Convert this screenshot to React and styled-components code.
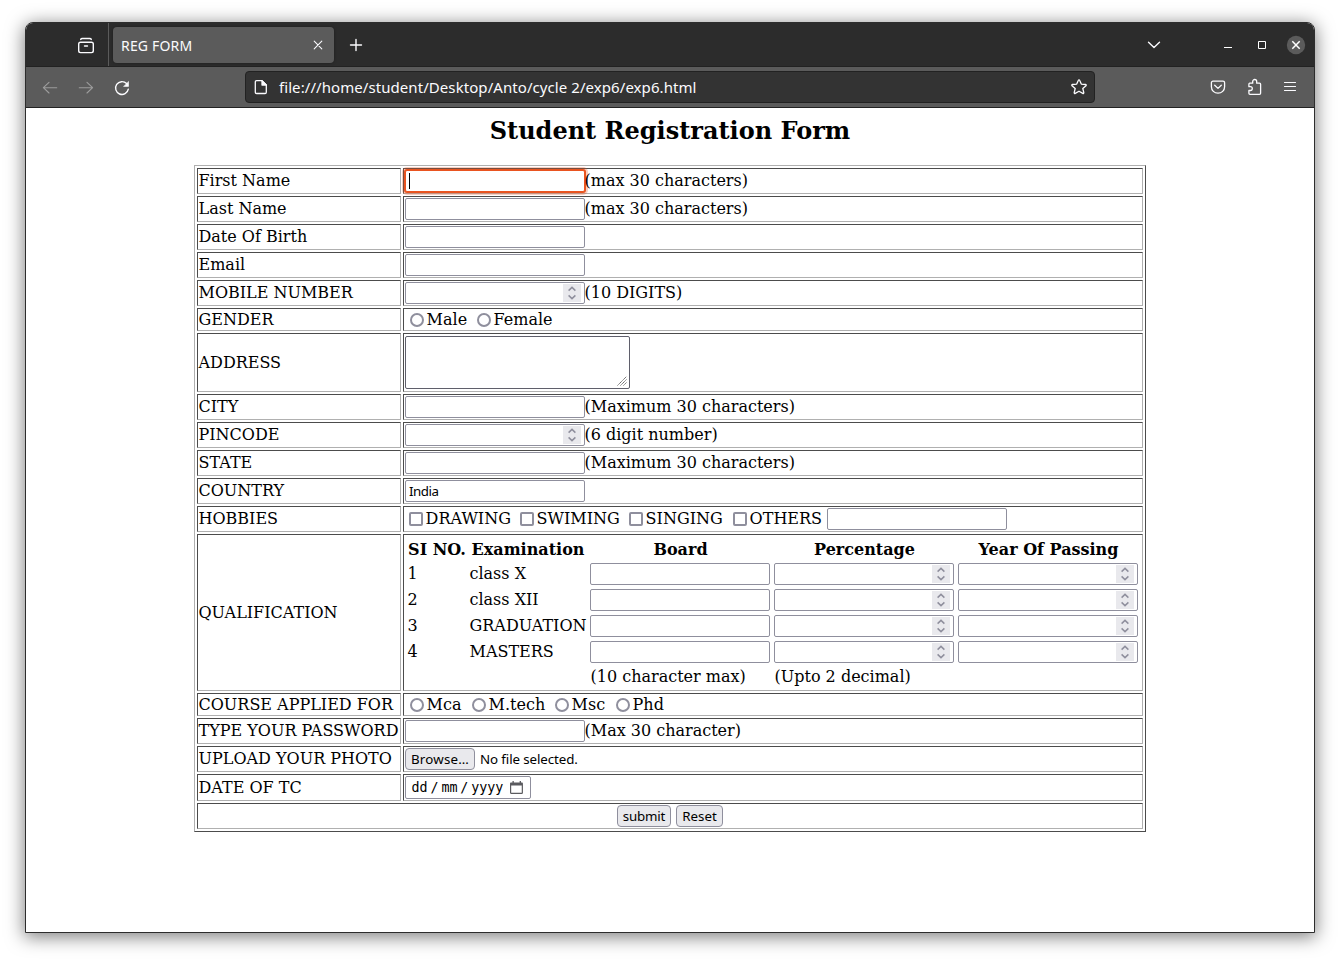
import React from 'react';
import styled, { createGlobalStyle, css } from 'styled-components';

const GlobalStyle = createGlobalStyle`
  * { box-sizing: border-box; }
  body { margin: 0; background: #fff; }
`;

const serif = '"DejaVu Serif", serif';
const ui = '"Noto Sans", "Open Sans", sans-serif';

/* ---------- browser window ---------- */

const Desktop = styled.div`
  height: 961px;
  padding: 22px 25px 28px;
  background: #fff;
  overflow: hidden;
`;

const Window = styled.div`
  width: 1290px;
  height: 911px;
  display: flex;
  flex-direction: column;
  border: 1px solid #2d2d2d;
  border-radius: 8px 8px 0 0;
  overflow: hidden;
  background: #fff;
  box-shadow: 0 3px 18px 1px rgba(0, 0, 0, 0.5);
`;

const TabStrip = styled.div`
  display: flex;
  align-items: stretch;
  flex: none;
  height: 43px;
  background: #2c2c2c;
`;

const FirefoxView = styled.div`
  display: flex;
  align-items: center;
  justify-content: flex-end;
  width: 83px;
  padding-right: 13px;
  border-right: 1px solid #5b5b5b;
`;

const Tab = styled.div`
  display: flex;
  align-items: center;
  justify-content: space-between;
  width: 221px;
  height: 36px;
  margin: 4px 0 0 4px;
  padding: 0 11px 0 8px;
  border-radius: 4px;
  background: #5b5b5b;
  box-shadow: 0 0 3px rgba(0, 0, 0, 0.35);
`;

const TabTitle = styled.span`
  padding-top: 2px;
  font: 14px/20px ${ui};
  letter-spacing: 0.18px;
  color: #fbfbfe;
`;

const NewTab = styled.div`
  display: flex;
  align-items: center;
  padding: 1px 0 0 14.500px;
`;

const WindowControls = styled.div`
  display: flex;
  align-items: center;
  margin-left: auto;
  padding: 0 8px 0 0;
`;

const ControlIcon = styled.svg`
  display: block;
  flex: none;
  margin-right: ${(p) => p.$gap || 0}px;
`;

const Toolbar = styled.div`
  display: flex;
  align-items: center;
  flex: none;
  height: 42px;
  padding: 0 14px;
  border-top: 1px solid #222;
  border-bottom: 1px solid #222;
  background: #5b5b5b;
`;

const NavIcons = styled.div`
  display: flex;
  gap: 16px;
  width: 205px;
  padding-top: 1px;
`;

const AddressBar = styled.div`
  display: flex;
  align-items: center;
  width: 850px;
  height: 32px;
  padding: 0 6px;
  border: 1px solid #222;
  border-radius: 4px;
  background: #333;
`;

const Url = styled.span`
  flex: 1;
  margin-left: 9px;
  font: 15px/20px ${ui};
  letter-spacing: 0.07px;
  white-space: pre;
  color: #fbfbfe;
`;

const ToolbarActions = styled.div`
  display: flex;
  gap: 16px;
  margin-left: auto;
`;

/* ---------- page ---------- */

const Page = styled.main`
  flex: 1;
  display: flex;
  flex-direction: column;
  align-items: center;
  padding-top: 9px;
  font: 16px/19px ${serif};
  color: #000;
`;

const Title = styled.h1`
  margin: 0 0 20px;
  font: bold 24px/28px ${serif};
`;

const FormTable = styled.form`
  display: grid;
  grid-template-columns: 204px 740px;
  gap: 2px;
  padding: 2px;
  border: 1px solid;
  border-color: #b0b0b0 #4c4c4c #4c4c4c #b0b0b0;
`;

const cell = css`
  display: flex;
  height: ${(p) => p.$h || 26}px;
  padding: 1px;
  border: 1px solid;
  border-color: #4c4c4c #b0b0b0 #b0b0b0 #4c4c4c;
  white-space: nowrap;
`;

const LabelCell = styled.div`
  ${cell}
  align-items: center;
  padding: 0 0 ${(p) => (p.$h ? 0 : 1)}px 0.5px;
`;

const FieldCell = styled.div`
  ${cell}
  align-items: flex-start;
`;

const SubmitCell = styled.div`
  ${cell}
  grid-column: 1 / -1;
  justify-content: center;
  gap: 5px;
`;

const Hint = styled.span`
  margin-left: -0.5px;
  padding-top: 1px;
`;

const Field = styled.div`
  display: flex;
  align-items: center;
  width: 180px;
  height: 22px;
  padding: 0 3px;
  border: 1px solid #8f8f9d;
  border-radius: 2px;
  background: #fff;
  ${(p) => p.$focused && css`
    border-color: #e95420;
    box-shadow: 0 0 0 1px #e95420, 0 0 0 3px rgba(233, 84, 32, 0.28);
  `}
`;

const Input = styled.input`
  flex: 1;
  min-width: 0;
  height: 18px;
  padding: 0;
  border: 0;
  outline: 0;
  background: transparent;
  font: 13.333px/18px ${ui};
  letter-spacing: -0.5px;
  color: #000;
`;

const Caret = styled.span`
  width: 1px;
  height: 16px;
  background: #000;
`;

const Spinner = styled.span`
  display: flex;
  align-items: center;
  justify-content: center;
  width: 18px;
  height: 18px;
  background: #e9e9ed;
`;

const TextArea = styled.div`
  display: flex;
  align-items: flex-end;
  justify-content: flex-end;
  width: 225px;
  height: 53px;
  margin-top: 1px;
  padding: 2px;
  border: 1px solid #5f5f6b;
  border-radius: 2px;
`;

const ChoiceRow = styled.div`
  display: flex;
  padding-left: ${(p) => p.$pl || 0}px;
`;

const Choice = styled.label`
  display: flex;
  width: ${(p) => p.$w}px;
  padding-top: ${(p) => p.$pt || 0}px;
`;

const Radio = styled.span`
  flex: none;
  width: 14px;
  height: 14px;
  margin: 3px 2.600px 0 0;
  border: 2px solid #8f8f9d;
  border-radius: 50%;
`;

const Check = styled.span`
  flex: none;
  width: 14px;
  height: 14px;
  margin: 3px 2.600px 0 0;
  border: 2px solid #8f8f9d;
  border-radius: 2px;
`;

const Qualification = styled.div`
  display: grid;
  grid-template-columns: 60px 118px 182px 182px 182px;
  grid-template-rows: 22px repeat(4, 24px) 21px;
  gap: 2px;
  padding: 2px;
`;

const QHead = styled.b`
  padding: 2px 0 0 ${(p) => p.$shift || 0}px;
  text-align: center;
`;

const QText = styled.span`
  padding: 2px 0 0 0.5px;
`;

const QNote = styled.span`
  padding: 1px 0 0 1.500px;
`;

const QField = styled.span`
  padding: 1px;
`;

const Button = styled.button`
  width: ${(p) => p.$w}px;
  height: 22px;
  padding: 0;
  border: 1px solid #8f8f9d;
  border-radius: 4px;
  background: #e9e9ed;
  font: 13.333px/19px ${ui};
  letter-spacing: ${(p) => p.$ls || 0}px;
  white-space: nowrap;
  color: #000;
`;

const FileName = styled.span`
  margin-left: 5px;
  padding-top: 1px;
  font: 13.333px/20px ${ui};
  letter-spacing: -0.1px;
`;

const DateField = styled.div`
  display: flex;
  align-items: center;
  width: 126px;
  height: 23px;
  padding: 0 6px 0 5.500px;
  border: 1px solid #8f8f9d;
  border-radius: 2px;
  font: 13.333px/20px "DejaVu Sans Mono", monospace;
`;

const DatePart = styled.span`
  width: ${(p) => p.$w}px;
`;

/* ---------- icons ---------- */

const Icon = ({ size = 20, gap, color = '#fbfbfe', width = 1.25, children }) => (
  <ControlIcon $gap={gap} width={size} height={size} viewBox={`0 0 ${size} ${size}`} fill="none"
    stroke={color} strokeWidth={width} strokeLinecap="round" strokeLinejoin="round">
    {children}
  </ControlIcon>
);

const SpinArrows = () => (
  <Spinner>
    <svg width="18" height="18" viewBox="0 0 18 18" fill="none" stroke="#8f8f9d" strokeWidth="1.5">
      <path d="M5.6 6.600 9 3.400l3.400 3.200M5.600 11.400 9 14.600l3.400-3.200" />
    </svg>
  </Spinner>
);

const TextField = ({ value, focused }) => (
  <Field $focused={focused}>
    {focused && <Caret />}
    <Input defaultValue={value} />
  </Field>
);

const NumberField = () => (
  <Field><Input /><SpinArrows /></Field>
);

/* ---------- form data ---------- */

const personal = [
  { label: 'First Name', focused: true, hint: '(max 30 characters)' },
  { label: 'Last Name', hint: '(max 30 characters)' },
  { label: 'Date Of Birth' },
  { label: 'Email' },
  { label: 'MOBILE NUMBER', number: true, hint: '(10 DIGITS)' },
];

const location = [
  { label: 'CITY', hint: '(Maximum 30 characters)' },
  { label: 'PINCODE', number: true, hint: '(6 digit number)' },
  { label: 'STATE', hint: '(Maximum 30 characters)' },
  { label: 'COUNTRY', value: 'India' },
];

const exams = ['class X', 'class XII', 'GRADUATION', 'MASTERS'];
const hobbies = [['DRAWING', 111], ['SWIMING', 109], ['SINGING', 104], ['OTHERS', 94]];
const courses = [['Mca', 62], ['M.tech', 83], ['Msc', 61], ['Phd', 60]];
const genders = [['Male', 67], ['Female', 90]];

const FieldRow = ({ label, number, hint, value, focused }) => (
  <>
    <LabelCell>{label}</LabelCell>
    <FieldCell>
      {number ? <NumberField /> : <TextField value={value} focused={focused} />}
      {hint && <Hint>{hint}</Hint>}
    </FieldCell>
  </>
);

const RadioRow = ({ label, options }) => (
  <>
    <LabelCell $h={23}>{label}</LabelCell>
    <FieldCell $h={23}>
      <ChoiceRow $pl={5}>
        {options.map(([text, w]) => <Choice key={text} $w={w}><Radio />{text}</Choice>)}
      </ChoiceRow>
    </FieldCell>
  </>
);

export default function App() {
  return (
    <>
      <GlobalStyle />
      <Desktop>
        <Window>
          <TabStrip>
            <FirefoxView>
              <Icon size={18} width={1.4}>
                <rect x="1.700" y="6.200" width="14.600" height="10.400" rx="1.800" />
                <path d="M3.700 3.400c.3-.6.8-.9 1.600-.9h7.400c.8 0 1.300.3 1.600.9M7.500 10h3" />
              </Icon>
            </FirefoxView>
            <Tab>
              <TabTitle>REG FORM</TabTitle>
              <Icon size={10} width={1.1}><path d="m1.200 1.200 7.600 7.600m0-7.600L1.200 8.800" /></Icon>
            </Tab>
            <NewTab>
              <Icon size={14} width={1.4}><path d="M7 1.500v11M1.500 7h11" /></Icon>
            </NewTab>
            <WindowControls>
              <Icon size={14} gap={62} width={1.4}><path d="m1.500 4.200 5.500 5.200 5.500-5.200" /></Icon>
              <ControlIcon $gap={24} width="10" height="10" viewBox="0 0 10 10">
                <path d="M1 7h8v1H1z" fill="#fff" />
              </ControlIcon>
              <ControlIcon $gap={19} width="10" height="10" viewBox="0 0 10 10" fill="none" stroke="#fff">
                <path d="M1.500 1.500h7v7h-7z" />
              </ControlIcon>
              <ControlIcon width="20" height="20" viewBox="0 0 20 20" fill="none">
                <circle cx="10" cy="10" r="9.200" fill="#5b5b5b" />
                <path d="m6.300 6.300 7.400 7.400m0-7.400-7.400 7.400" stroke="#fff" strokeWidth="1.500" />
              </ControlIcon>
            </WindowControls>
          </TabStrip>

          <Toolbar>
            <NavIcons>
              <Icon color="#9c9c9c" width={1.15}><path d="M16.700 9.700H3.500M9 4.400 3.400 9.700 9 15" /></Icon>
              <Icon color="#9c9c9c" width={1.15}><path d="M3.300 9.700h13.200M11 4.400l5.600 5.300-5.600 5.300" /></Icon>
              <Icon width={1.4}>
                <path d="M16.300 11.200a6.400 6.400 0 1 1-1.700-5.600" />
                <path d="M16.500 3.800v4.600h-4.600z" fill="#fbfbfe" strokeWidth=".6" />
              </Icon>
            </NavIcons>
            <AddressBar>
              <Icon size={18} width={1.3}>
                <path d="M4.600 2.700H10l4.300 4.300v7.200c0 .8-.5 1.300-1.300 1.300H4.600c-.8 0-1.300-.5-1.300-1.300V4c0-.8.5-1.300 1.300-1.300z" />
                <path d="M10 2.700V7h4.300z" fill="#fbfbfe" />
              </Icon>
              <Url>file:///home/student/Desktop/Anto/cycle 2/exp6/exp6.html</Url>
              <Icon size={18} width={1.3}>
                <path d="M8.400 2.200c.2-.5 1-.5 1.200 0l1.700 3.900 4.300.4c.6.100.8.800.4 1.200l-3.200 2.800 1 4.200c.1.600-.5 1-1 .7L9 13.200l-3.800 2.200c-.5.300-1.100-.1-1-.7l1-4.200L2 7.700c-.4-.4-.2-1.100.4-1.200l4.300-.4z" />
              </Icon>
            </AddressBar>
            <ToolbarActions>
              <Icon width={1.3}>
                <path d="M5 4.200h10c1 0 1.600.6 1.600 1.600v4c0 3.700-2.900 6.400-6.600 6.400S3.400 13.500 3.400 9.800v-4c0-1 .6-1.600 1.600-1.600z" />
                <path d="M6.700 8.200 10 11.400l3.300-3.200" />
              </Icon>
              <Icon width={1.3}>
                <path d="M5.700 6.200h3V4.500a2 2 0 0 1 4 0v1.700h2.800c.7 0 1.100.4 1.100 1.100v8.900c0 .7-.4 1.100-1.100 1.100H6c-.7 0-1.100-.4-1.100-1.100v-2.700h1.500a1.900 1.900 0 0 0 0-3.800H4.900V7.300c0-.7.3-1.100.8-1.100z" />
              </Icon>
              <Icon width={1.2}><path d="M4.500 5.500h11M4.500 9.500h11M4.500 13.500h11" /></Icon>
            </ToolbarActions>
          </Toolbar>

          <Page>
            <Title>Student Registration Form</Title>
            <FormTable>
              {personal.map((row) => <FieldRow key={row.label} {...row} />)}

              <RadioRow label="GENDER" options={genders} />

              <LabelCell $h={59}>ADDRESS</LabelCell>
              <FieldCell $h={59}>
                <TextArea>
                  <svg width="10" height="10" viewBox="0 0 10 10" stroke="#666" strokeWidth="1" strokeDasharray="1.400 .4">
                    <path d="M.5 9.500l9-9M3.500 9.500l6-6M6.500 9.500l3-3" />
                  </svg>
                </TextArea>
              </FieldCell>

              {location.map((row) => <FieldRow key={row.label} {...row} />)}

              <LabelCell>HOBBIES</LabelCell>
              <FieldCell>
                <ChoiceRow $pl={4}>
                  {hobbies.map(([text, w]) => <Choice key={text} $w={w} $pt={1}><Check />{text}</Choice>)}
                </ChoiceRow>
                <TextField />
              </FieldCell>

              <LabelCell $h={157}>QUALIFICATION</LabelCell>
              <FieldCell $h={157}>
                <Qualification>
                  <QHead>SI NO.</QHead>
                  <QHead>Examination</QHead>
                  <QHead $shift={1}>Board</QHead>
                  <QHead $shift={1}>Percentage</QHead>
                  <QHead $shift={1}>Year Of Passing</QHead>
                  {exams.map((exam, i) => (
                    <React.Fragment key={exam}>
                      <QText>{i + 1}</QText>
                      <QText>{exam}</QText>
                      <QField><TextField /></QField>
                      <QField><NumberField /></QField>
                      <QField><NumberField /></QField>
                    </React.Fragment>
                  ))}
                  <span />
                  <span />
                  <QNote>(10 character max)</QNote>
                  <QNote>(Upto 2 decimal)</QNote>
                </Qualification>
              </FieldCell>

              <RadioRow label="COURSE APPLIED FOR" options={courses} />
              <FieldRow label="TYPE YOUR PASSWORD" hint="(Max 30 character)" />

              <LabelCell>UPLOAD YOUR PHOTO</LabelCell>
              <FieldCell>
                <Button type="button" $w={70} $ls={0.2}>Browse…</Button>
                <FileName>No file selected.</FileName>
              </FieldCell>

              <LabelCell $h={27}>DATE OF TC</LabelCell>
              <FieldCell $h={27}>
                <DateField>
                  <DatePart $w={19}>dd</DatePart>
                  <DatePart $w={11}>/</DatePart>
                  <DatePart $w={19}>mm</DatePart>
                  <DatePart $w={11}>/</DatePart>
                  <DatePart $w={39}>yyyy</DatePart>
                  <svg width="14" height="14" viewBox="0 0 14 14" fill="#5b5b5f">
                    <path fillRule="evenodd" d="M2.500 0h1.300v1.500h5.900V0H11v1.500h.8c.8 0 1.200.4 1.200 1.200v9.100c0 .8-.4 1.200-1.200 1.200H1.200C.4 13 0 12.600 0 11.800V2.700c0-.8.4-1.200 1.200-1.200h1.300zM1.200 4.500v7.300h10.600V4.500z" />
                  </svg>
                </DateField>
              </FieldCell>

              <SubmitCell>
                <Button type="button" $w={54} $ls={-0.2}>submit</Button>
                <Button type="button" $w={47}>Reset</Button>
              </SubmitCell>
            </FormTable>
          </Page>
        </Window>
      </Desktop>
    </>
  );
}
